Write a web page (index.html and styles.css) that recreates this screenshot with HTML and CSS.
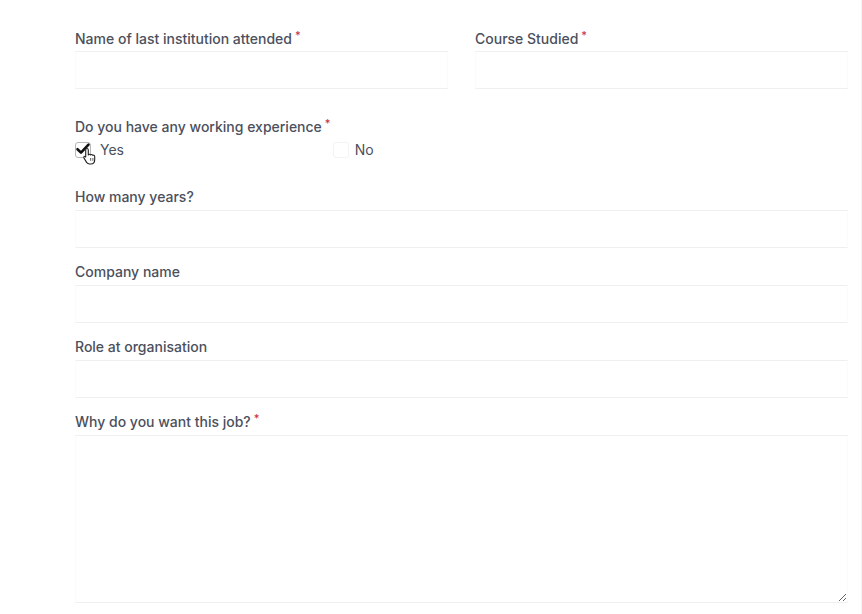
FILE: index.html
```html
<!DOCTYPE html>
<html lang="en">
<head>
<meta charset="utf-8">
<title>Application form</title>
<link rel="stylesheet" href="styles.css">
</head>
<body>
<form class="form">
  <div class="row two">
    <div class="field">
      <label class="label">Name of last institution attended<span class="req">*</span></label>
      <input class="input" type="text">
    </div>
    <div class="field">
      <label class="label">Course Studied<span class="req">*</span></label>
      <input class="input" type="text">
    </div>
  </div>

  <div class="group">
    <div class="label">Do you have any working experience<span class="req">*</span></div>
    <div class="options">
      <label class="option">
        <span class="box checked">
          <svg class="tick" viewBox="0 0 16 16" width="16" height="16"><path d="M2.5 8.2 L6 11.6 L13.5 3.6" fill="none" stroke="#111" stroke-width="2.6" stroke-linecap="round" stroke-linejoin="round"/></svg>
          <svg class="hand" viewBox="0 0 16 18" width="16" height="18"><path d="M5 1.5c.8 0 1.3.6 1.3 1.4v5l.3-.1c.3-.8 1.8-.8 2.1.2.5-.7 1.8-.6 2.1.4.6-.5 1.9-.2 1.9 1v3.4c0 2.3-1.6 4.2-3.9 4.2H7.5c-1.3 0-2.2-.6-2.9-1.6L1.9 10.9c-.6-.9.5-2 1.4-1.3l.4.4V2.9c0-.8.5-1.4 1.3-1.4z" fill="#fff" stroke="#222" stroke-width="1.1" stroke-linejoin="round"/><path d="M8.7 11v2.8M10.9 11v2.8" stroke="#444" stroke-width=".9"/></svg>
        </span>
        <span class="opt-text">Yes</span>
      </label>
      <label class="option">
        <span class="box"></span>
        <span class="opt-text">No</span>
      </label>
    </div>
  </div>

  <div class="field">
    <label class="label">How many years?</label>
    <input class="input late" type="text">
  </div>
  <div class="field">
    <label class="label">Company name</label>
    <input class="input late" type="text">
  </div>
  <div class="field">
    <label class="label">Role at organisation</label>
    <input class="input late" type="text">
  </div>
  <div class="field">
    <label class="label">Why do you want this job?<span class="req">*</span></label>
    <textarea class="textarea"></textarea>
  </div>
</form>
</body>
</html>
```

FILE: styles.css
```css
* { box-sizing: border-box; }
html, body { margin: 0; padding: 0; background: #fff; }
body {
  font-family: Inter, "Helvetica Neue", Arial, sans-serif;
  color: #4b505c;
  width: 862px;
  height: 614px;
  overflow: hidden;
  border-right: 1px solid #f4f4f4;
}
.form {
  width: 773px;
  margin-left: 75px;
  padding-top: 29px;
  display: flex;
  flex-direction: column;
}
.row.two {
  display: grid;
  grid-template-columns: 1fr 1fr;
  column-gap: 27px;
  margin-bottom: 14px;
}
.field {
  display: flex;
  flex-direction: column;
  margin-bottom: 14px;
}
.label {
  font-size: 14px;
  font-weight: 500;
  line-height: 20px;
  height: 20px;
  color: #4b505c;
  display: block;
}
.req {
  color: #c8323a;
  font-size: 11px;
  position: relative;
  top: -5px;
  margin-left: 3px;
}
.input {
  margin-top: 2px;
  height: 38px;
  width: 100%;
  border: 1px solid #fbfbfb;
  border-top-color: #efefef;
  border-bottom-color: #efefef;
  background: #fff;
  outline: none;
  font: inherit;
}
.input.late { margin-top: 3px; }
.textarea {
  margin-top: 3px;
  height: 168px;
  width: 100%;
  border: 1px solid #fbfbfb;
  border-top-color: #efefef;
  border-bottom-color: #efefef;
  background: #fff;
  outline: none;
  resize: vertical;
  font: inherit;
}
.group {
  margin-bottom: 27px;
}
.options {
  display: grid;
  grid-template-columns: repeat(3, 1fr);
  margin-top: 3px;
  height: 20px;
  align-items: center;
}
.option {
  display: flex;
  align-items: center;
  font-size: 14px;
  color: #4b505c;
}
.box {
  position: relative;
  width: 16px;
  height: 16px;
  border: 1px solid #f3f3f3;
  border-radius: 3px;
  margin-right: 6px;
  display: inline-block;
  flex: none;
}
.box.checked {
  border-color: #b8b8b8;
  margin-right: 9px;
}
.tick {
  position: absolute;
  left: -1px;
  top: -2px;
}
.hand {
  position: absolute;
  left: 6px;
  top: 4px;
}
.opt-text { line-height: 20px; }
```
